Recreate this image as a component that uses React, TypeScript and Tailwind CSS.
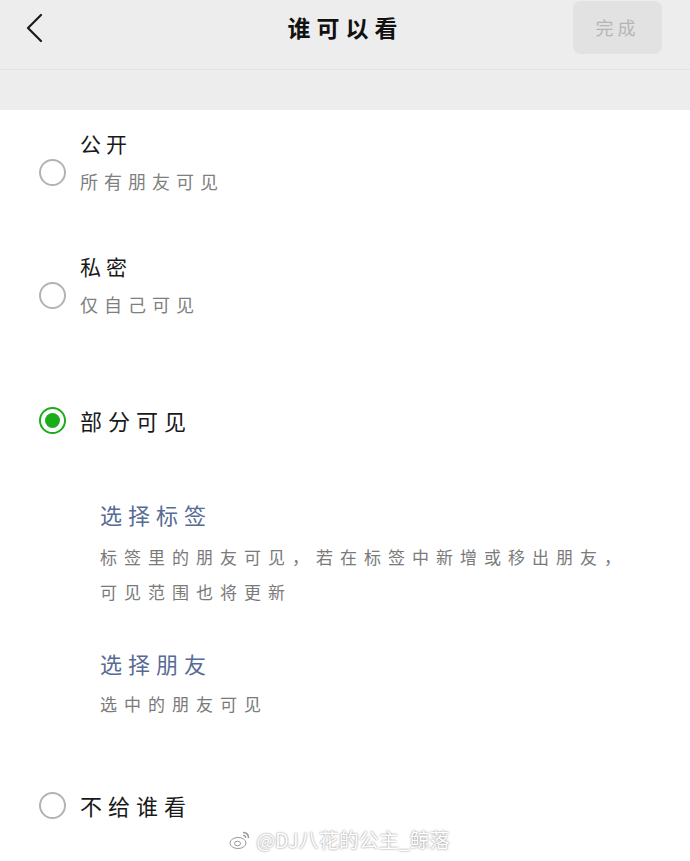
const font = "font-['Noto_Sans_CJK_SC','Noto_Sans',sans-serif]";

const Radio = ({ checked = false }: { checked?: boolean }) =>
  checked ? (
    <span className="flex size-[27px] shrink-0 items-center justify-center rounded-full border-[2.5px] border-[#1aad19] bg-white">
      <span className="size-[15px] rounded-full bg-[#1aad19]" />
    </span>
  ) : (
    <span className="block size-[27px] shrink-0 rounded-full border-[2.5px] border-[#b3b3b3]" />
  );

const Option = ({ title, desc }: { title: string; desc: string }) => (
  <div className="flex gap-[14px] pl-[39px]">
    <div className="mt-[31px]">
      <Radio />
    </div>
    <div className="flex flex-col">
      <span className="text-[21px] leading-[30px] tracking-[5px] text-[#191919]">{title}</span>
      <span className="mt-[8px] text-[18px] leading-[30px] tracking-[6px] text-[#7f7f7f]">{desc}</span>
    </div>
  </div>
);

export default function App() {
  return (
    <div className={`${font} relative min-h-[861px] w-[690px] overflow-hidden bg-white`}>
      <header className="flex h-[70px] items-center justify-between border-b border-[#e3e3e3] bg-[#ededed] pb-[14px] pl-[24px] pr-[28px]">
        <svg viewBox="0 0 20 30" className="h-[30px] w-[20px]" fill="none" stroke="#1a1a1a" strokeWidth="2.2" strokeLinecap="round" strokeLinejoin="round">
          <path d="M17 2 4 15l13 13" />
        </svg>
        <h1 className="ml-[74px] text-[23px] font-bold tracking-[6px] text-[#111]">谁可以看</h1>
        <button className="h-[53px] w-[89px] rounded-[8px] bg-[#e2e2e2] text-[18px] tracking-[4px] text-[#b5b5b5]">
          完成
        </button>
      </header>
      <div className="h-[40px] bg-[#ededed]" />

      <div className="flex flex-col pt-[18px]">
        <Option title="公开" desc="所有朋友可见" />
        <div className="mt-[55px]">
          <Option title="私密" desc="仅自己可见" />
        </div>

        <div className="mt-[86px] flex items-center gap-[14px] pl-[39px]">
          <Radio checked />
          <span className="text-[22px] leading-[30px] tracking-[6px] text-[#191919]">部分可见</span>
        </div>

        <div className="mt-[64px] flex flex-col pl-[100px] pr-[20px]">
          <span className="text-[22px] leading-[30px] tracking-[6px] text-[#576b95]">选择标签</span>
          <p className="mt-[10px] text-[17px] leading-[35px] tracking-[7px] text-[#7a7a7a]">
            标签里的朋友可见，若在标签中新增或移出朋友，
            <br />
            可见范围也将更新
          </p>
          <span className="mt-[39px] text-[22px] leading-[30px] tracking-[6px] text-[#576b95]">选择朋友</span>
          <p className="mt-[8px] text-[17px] leading-[35px] tracking-[7px] text-[#7a7a7a]">选中的朋友可见</p>
        </div>

        <div className="mt-[69px] flex items-center gap-[14px] pl-[39px]">
          <Radio />
          <span className="text-[22px] leading-[30px] tracking-[6px] text-[#191919]">不给谁看</span>
        </div>
      </div>

      <div className="absolute bottom-[6px] left-0 right-0 flex items-center justify-center gap-[4px] pr-[12px] text-[20px] text-white [text-shadow:0_0_2px_rgba(0,0,0,0.55)]">
        <svg viewBox="0 0 24 24" className="size-[24px]" fill="white" stroke="#999" strokeWidth="1">
          <ellipse cx="10" cy="15" rx="8" ry="5.5" />
          <ellipse cx="9.5" cy="15.5" rx="3" ry="2.3" fill="none" />
          <path d="M15 4.5a5 5 0 0 1 5.5 5.5" fill="none" strokeWidth="1.6" />
          <path d="M15 7.5a2 2 0 0 1 2.5 2.5" fill="none" strokeWidth="1.4" />
        </svg>
        <span>@DJ八花的公主_鲸落</span>
      </div>
    </div>
  );
}
